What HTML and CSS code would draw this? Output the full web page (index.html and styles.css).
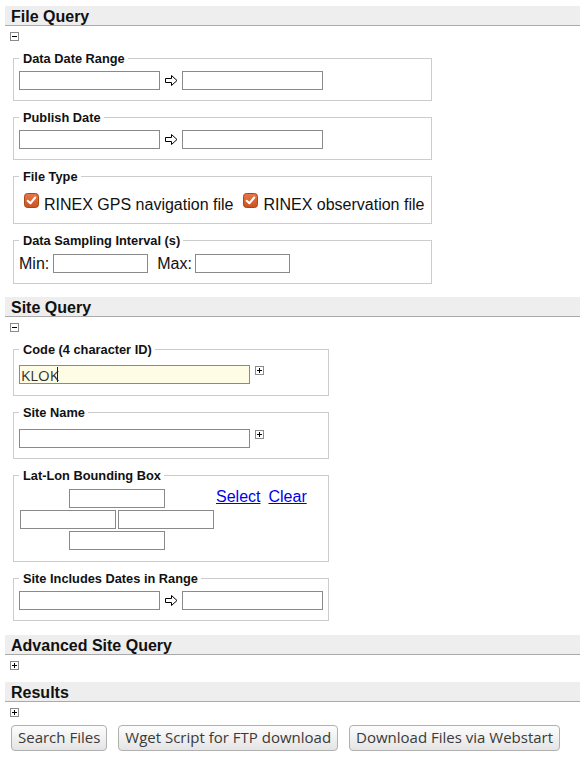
FILE: index.html
```html
<!DOCTYPE html>
<html>
<head>
<meta charset="utf-8">
<title>Query</title>
<link rel="stylesheet" href="styles.css">
</head>
<body>
<h2 class="sec-head">File Query</h2>
<span class="toggle"><svg width="9" height="9" viewBox="0 0 9 9"><rect x="0.5" y="0.5" width="8" height="8" fill="#fff" stroke="#8a8a8a"/><path d="M2 4.5H7" stroke="#000"/></svg></span>

<fieldset class="box wide first">
  <legend>Data Date Range</legend>
  <div class="row">
    <input class="in w141" type="text">
    <svg class="arrow" width="13" height="11" viewBox="0 0 13 11"><polygon points="0.5,3.5 6.5,3.5 6.5,0.5 12,5.5 6.5,10.5 6.5,7.5 0.5,7.5" fill="#fff" stroke="#000"/></svg>
    <input class="in w141" type="text">
  </div>
</fieldset>

<fieldset class="box wide">
  <legend>Publish Date</legend>
  <div class="row">
    <input class="in w141" type="text">
    <svg class="arrow" width="13" height="11" viewBox="0 0 13 11"><polygon points="0.5,3.5 6.5,3.5 6.5,0.5 12,5.5 6.5,10.5 6.5,7.5 0.5,7.5" fill="#fff" stroke="#000"/></svg>
    <input class="in w141" type="text">
  </div>
</fieldset>

<fieldset class="box wide ftype">
  <legend>File Type</legend>
  <div class="checks">
    <label class="opt"><svg class="chk" width="15" height="15" viewBox="0 0 15 15"><defs><linearGradient id="g1" x1="0" y1="0" x2="0" y2="1"><stop offset="0" stop-color="#e8784a"/><stop offset="1" stop-color="#c8521f"/></linearGradient></defs><rect x="0.5" y="0.5" width="14" height="14" rx="3" fill="url(#g1)" stroke="#a9461b"/><path d="M3.7 7.8L6.4 10.3L11.2 4.5" fill="none" stroke="#fff" stroke-width="2.1" stroke-linecap="round" stroke-linejoin="round"/></svg>RINEX GPS navigation file</label>
    <label class="opt opt2"><svg class="chk" width="15" height="15" viewBox="0 0 15 15"><rect x="0.5" y="0.5" width="14" height="14" rx="3" fill="url(#g1)" stroke="#a9461b"/><path d="M3.7 7.8L6.4 10.3L11.2 4.5" fill="none" stroke="#fff" stroke-width="2.1" stroke-linecap="round" stroke-linejoin="round"/></svg>RINEX observation file</label>
  </div>
</fieldset>

<fieldset class="box wide samp">
  <legend>Data Sampling Interval (s)</legend>
  <div class="row">
    <span class="lbl">Min:</span>
    <input class="in w95" type="text">
    <span class="lbl lbl-max">Max:</span>
    <input class="in w95" type="text">
  </div>
</fieldset>

<h2 class="sec-head next">Site Query</h2>
<span class="toggle"><svg width="9" height="9" viewBox="0 0 9 9"><rect x="0.5" y="0.5" width="8" height="8" fill="#fff" stroke="#8a8a8a"/><path d="M2 4.5H7" stroke="#000"/></svg></span>

<fieldset class="box narrow first code">
  <legend>Code (4 character ID)</legend>
  <div class="row top">
    <span class="code-wrap"><input class="in w231 hl" type="text" value="KLOK"></span>
    <span class="toggle inline"><svg width="9" height="9" viewBox="0 0 9 9"><rect x="0.5" y="0.5" width="8" height="8" fill="#fff" stroke="#8a8a8a"/><path d="M2 4.5H7M4.5 2V7" stroke="#000"/></svg></span>
  </div>
</fieldset>

<fieldset class="box narrow name">
  <legend>Site Name</legend>
  <div class="row top">
    <input class="in w231" type="text">
    <span class="toggle inline"><svg width="9" height="9" viewBox="0 0 9 9"><rect x="0.5" y="0.5" width="8" height="8" fill="#fff" stroke="#8a8a8a"/><path d="M2 4.5H7M4.5 2V7" stroke="#000"/></svg></span>
  </div>
</fieldset>

<fieldset class="box narrow bbox">
  <legend>Lat-Lon Bounding Box</legend>
  <div class="bbox-row">
    <div class="bgrid">
      <input class="in w96 span" type="text">
      <input class="in w96" type="text">
      <input class="in w96" type="text">
      <input class="in w96 span" type="text">
    </div>
    <div class="links"><a href="#">Select</a><a href="#">Clear</a></div>
  </div>
</fieldset>

<fieldset class="box narrow incl">
  <legend>Site Includes Dates in Range</legend>
  <div class="row">
    <input class="in w141" type="text">
    <svg class="arrow" width="13" height="11" viewBox="0 0 13 11"><polygon points="0.5,3.5 6.5,3.5 6.5,0.5 12,5.5 6.5,10.5 6.5,7.5 0.5,7.5" fill="#fff" stroke="#000"/></svg>
    <input class="in w141" type="text">
  </div>
</fieldset>

<h2 class="sec-head next adv">Advanced Site Query</h2>
<span class="toggle"><svg width="9" height="9" viewBox="0 0 9 9"><rect x="0.5" y="0.5" width="8" height="8" fill="#fff" stroke="#8a8a8a"/><path d="M2 4.5H7M4.5 2V7" stroke="#000"/></svg></span>

<h2 class="sec-head after-toggle">Results</h2>
<span class="toggle"><svg width="9" height="9" viewBox="0 0 9 9"><rect x="0.5" y="0.5" width="8" height="8" fill="#fff" stroke="#8a8a8a"/><path d="M2 4.5H7M4.5 2V7" stroke="#000"/></svg></span>

<div class="btns">
  <button type="button">Search Files</button>
  <button type="button">Wget Script for FTP download</button>
  <button type="button">Download Files via Webstart</button>
</div>
</body>
</html>
```

FILE: styles.css
```css
* { box-sizing: border-box; }

body {
  margin: 6px 0 0 5px;
  font-family: "Liberation Sans", Arial, sans-serif;
  color: #000;
  background: #fff;
}

.sec-head {
  margin: 0;
  height: 20px;
  padding: 1px 0 0 6px;
  background: #eeeeee;
  border-bottom: 1px solid #aaaaaa;
  font-size: 16px;
  font-weight: bold;
  line-height: 20px;
  color: #111;
}
.sec-head.next { margin-top: 13px; }
.sec-head.adv { margin-top: 14px; }
.sec-head.after-toggle { margin-top: 12px; }

.toggle {
  display: block;
  width: 9px;
  height: 9px;
  margin: 6px 0 0 5px;
}
.toggle svg { display: block; }
.toggle.inline {
  margin: 1px 0 0 5px;
}

.box {
  margin: 9px 0 0 8px;
  padding: 5px 5px 10px;
  border: 1px solid #cccccc;
  min-width: 0;
}
.box.first { margin-top: 10px; }
.wide { width: 419px; }
.narrow { width: 316px; }
.ftype { padding-bottom: 8px; }
.samp { padding-top: 6px; }
.code { padding-top: 8px; }
.name { padding-top: 9px; }
.bbox { padding-top: 6px; padding-bottom: 11px; }
.incl { padding-top: 5px; }

legend {
  font-size: 12.8px;
  font-weight: bold;
  line-height: 15px;
  padding: 0 3px 0 4px;
  color: #111;
}

.row {
  display: flex;
  align-items: center;
}
.row.top { align-items: flex-start; }

.in {
  height: 19px;
  margin: 0;
  padding: 0 1px;
  border: 1px solid #8a8a8a;
  border-radius: 0;
  background: #fff;
  font-family: "Open Sans", sans-serif;
  font-size: 15px;
  color: #333;
  outline: none;
}
.w141 { width: 141px; }
.w95 { width: 95px; }
.w96 { width: 96px; }
.w231 { width: 231px; }
.hl { background: #fffce6; }

.code-wrap {
  position: relative;
  display: block;
}
.code-wrap::after {
  content: "";
  position: absolute;
  left: 38px;
  top: 2px;
  width: 1px;
  height: 15px;
  background: #222;
}

.arrow {
  display: block;
  margin: 0 4px 0 5px;
}

.checks {
  display: flex;
  align-items: flex-start;
  height: 20px;
  margin-top: 6px;
  font-size: 16px;
  line-height: 20px;
  color: #111;
}
.opt {
  display: flex;
  align-items: flex-start;
}
.opt2 { margin-left: 5px; }
.chk {
  display: block;
  flex: none;
  margin: -2px 5px 0 5px;
}

.lbl {
  font-size: 16px;
  line-height: 19px;
  color: #111;
  margin-right: 4px;
}
.lbl-max { margin-left: 9px; margin-right: 3px; }

.bbox-row {
  display: flex;
  align-items: flex-start;
}
.bgrid {
  display: grid;
  grid-template-columns: 96px 96px;
  column-gap: 2px;
  row-gap: 2px;
  margin-left: 1px;
}
.bgrid .span {
  grid-column: 1 / 3;
  justify-self: center;
}
.links {
  display: flex;
  gap: 8px;
  margin-left: 2px;
  font-size: 16px;
  line-height: 16px;
}
.links a { color: #0000ee; text-decoration: underline; }

.btns {
  display: flex;
  gap: 11px;
  margin: 8px 0 0 6px;
}
.btns button {
  height: 26px;
  margin: 0;
  padding: 0 6px;
  border: 1px solid #b0b0b0;
  border-radius: 4px;
  background: linear-gradient(#fdfdfd, #e4e4e4);
  font-family: "Open Sans", sans-serif;
  font-size: 15px;
  line-height: 23px;
  color: #3a3a3a;
}
```
